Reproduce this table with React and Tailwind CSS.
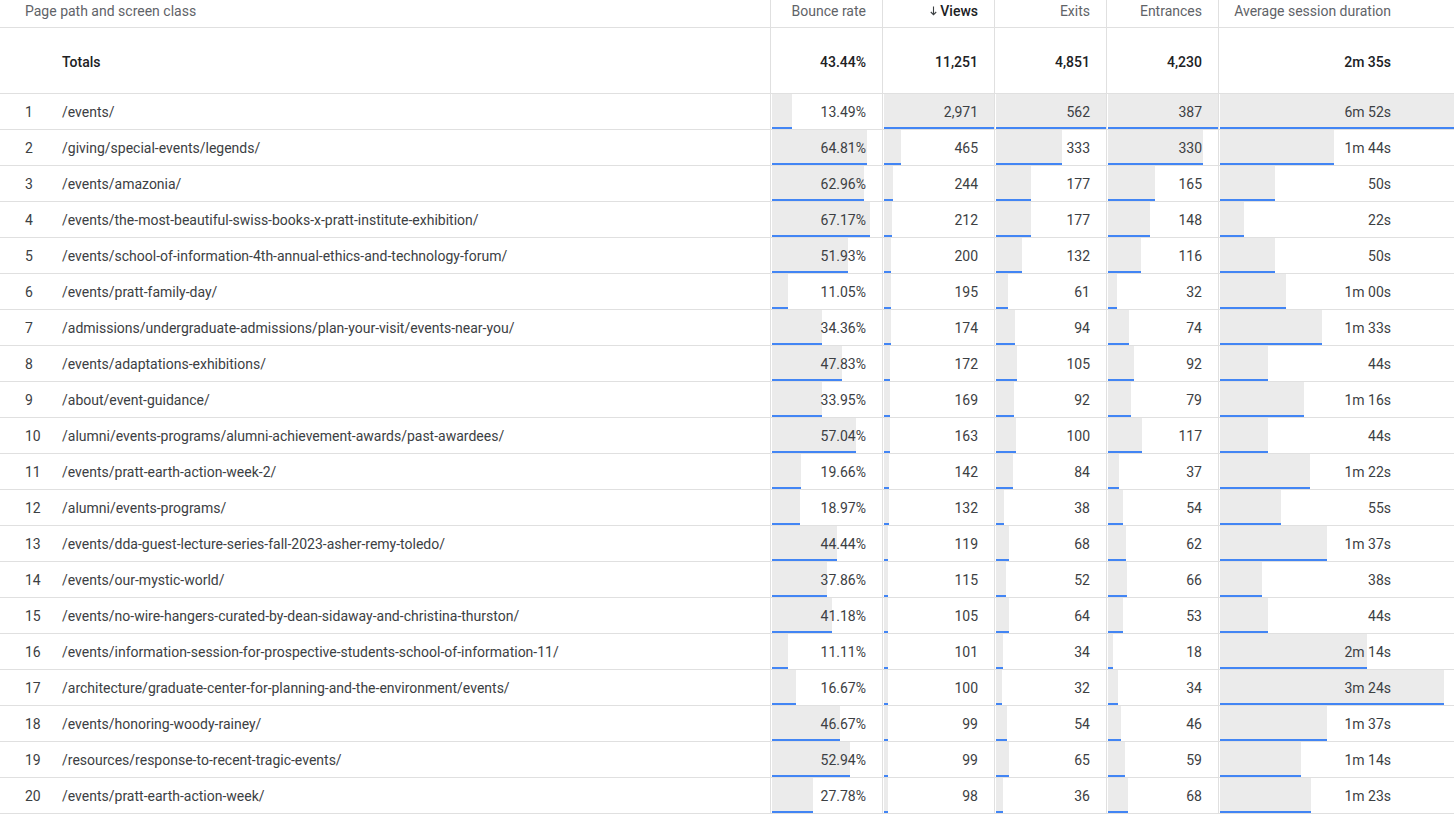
import React from 'react';

const ROWS = [
  ['/events/', 13.49, 2971, 562, 387, '6m 52s', 412],
  ['/giving/special-events/legends/', 64.81, 465, 333, 330, '1m 44s', 104],
  ['/events/amazonia/', 62.96, 244, 177, 165, '50s', 50],
  ['/events/the-most-beautiful-swiss-books-x-pratt-institute-exhibition/', 67.17, 212, 177, 148, '22s', 22],
  ['/events/school-of-information-4th-annual-ethics-and-technology-forum/', 51.93, 200, 132, 116, '50s', 50],
  ['/events/pratt-family-day/', 11.05, 195, 61, 32, '1m 00s', 60],
  ['/admissions/undergraduate-admissions/plan-your-visit/events-near-you/', 34.36, 174, 94, 74, '1m 33s', 93],
  ['/events/adaptations-exhibitions/', 47.83, 172, 105, 92, '44s', 44],
  ['/about/event-guidance/', 33.95, 169, 92, 79, '1m 16s', 76],
  ['/alumni/events-programs/alumni-achievement-awards/past-awardees/', 57.04, 163, 100, 117, '44s', 44],
  ['/events/pratt-earth-action-week-2/', 19.66, 142, 84, 37, '1m 22s', 82],
  ['/alumni/events-programs/', 18.97, 132, 38, 54, '55s', 55],
  ['/events/dda-guest-lecture-series-fall-2023-asher-remy-toledo/', 44.44, 119, 68, 62, '1m 37s', 97],
  ['/events/our-mystic-world/', 37.86, 115, 52, 66, '38s', 38],
  ['/events/no-wire-hangers-curated-by-dean-sidaway-and-christina-thurston/', 41.18, 105, 64, 53, '44s', 44],
  ['/events/information-session-for-prospective-students-school-of-information-11/', 11.11, 101, 34, 18, '2m 14s', 134],
  ['/architecture/graduate-center-for-planning-and-the-environment/events/', 16.67, 100, 32, 34, '3m 24s', 204],
  ['/events/honoring-woody-rainey/', 46.67, 99, 54, 46, '1m 37s', 97],
  ['/resources/response-to-recent-tragic-events/', 52.94, 99, 65, 59, '1m 14s', 74],
  ['/events/pratt-earth-action-week/', 27.78, 98, 36, 68, '1m 23s', 83],
];

const GRID = 'grid grid-cols-[770px_112px_112px_112px_112px_1fr]';
const FONT = { fontFamily: 'Roboto, "Liberation Sans", sans-serif' };

function fmt(n) {
  return n.toLocaleString('en-US');
}

function BarCell({ width, children, last }) {
  return (
    <div className={`relative flex items-center justify-end border-l border-[#e0e0e0] pt-[2px] ${last ? 'pr-[63px]' : 'pr-4'}`}>
      <div
        className="absolute left-[1px] top-0 bottom-0 bg-[#ebebeb] border-b-2 border-[#4285f4]"
        style={{ width: Math.max(2, Math.round(width)) + 'px' }}
      />
      <span className="relative">{children}</span>
    </div>
  );
}

export default function App() {
  return (
    <div className="w-[1454px] bg-white text-[14px] text-[#3c4043]" style={FONT}>
      <div className={`${GRID} h-[28px] border-b border-[#e0e0e0] text-[#5f6368] leading-5`}>
        <div className="pl-[25px] pt-[1px]">Page path and screen class</div>
        <div className="border-l border-[#e0e0e0] pr-4 pt-[1px] text-right">Bounce rate</div>
        <div className="flex justify-end items-start gap-[2px] border-l border-[#e0e0e0] pr-4 pt-[1px] font-medium text-[#202124]">
          <svg width="9" height="12" viewBox="0 0 9 12" className="mt-[4px]" fill="none" stroke="#3c4043" strokeWidth="1.1">
            <path d="M4.5 1.5v8M1.8 7l2.7 2.7L7.2 7" />
          </svg>
          <span>Views</span>
        </div>
        <div className="border-l border-[#e0e0e0] pr-4 pt-[1px] text-right">Exits</div>
        <div className="border-l border-[#e0e0e0] pr-4 pt-[1px] text-right">Entrances</div>
        <div className="border-l border-[#e0e0e0] pr-[63px] pt-[1px] text-right">Average session duration</div>
      </div>

      <div className={`${GRID} h-[66px] border-b border-[#e0e0e0] font-medium text-[#202124]`}>
        <div className="flex items-center pl-[62px] pt-[4px]">Totals</div>
        <div className="flex items-center justify-end border-l border-[#e0e0e0] pr-4 pt-[4px]">43.44%</div>
        <div className="flex items-center justify-end border-l border-[#e0e0e0] pr-4 pt-[4px]">11,251</div>
        <div className="flex items-center justify-end border-l border-[#e0e0e0] pr-4 pt-[4px]">4,851</div>
        <div className="flex items-center justify-end border-l border-[#e0e0e0] pr-4 pt-[4px]">4,230</div>
        <div className="flex items-center justify-end border-l border-[#e0e0e0] pr-[63px] pt-[4px]">2m 35s</div>
      </div>

      {ROWS.map((r, i) => (
        <div key={i} className={`${GRID} h-[36px] border-b border-[#e0e0e0]`}>
          <div className="flex items-center pt-[2px]">
            <span className="w-[62px] shrink-0 pl-[25px]">{i + 1}</span>
            <span>{r[0]}</span>
          </div>
          <BarCell width={r[1] * 1.465}>{r[1].toFixed(2)}%</BarCell>
          <BarCell width={(r[2] / 2971) * 111}>{fmt(r[2])}</BarCell>
          <BarCell width={(r[3] / 562) * 111}>{fmt(r[3])}</BarCell>
          <BarCell width={(r[4] / 387) * 111}>{fmt(r[4])}</BarCell>
          <BarCell width={Math.min(r[6] * 1.1, 235)} last>{r[5]}</BarCell>
        </div>
      ))}
    </div>
  );
}
